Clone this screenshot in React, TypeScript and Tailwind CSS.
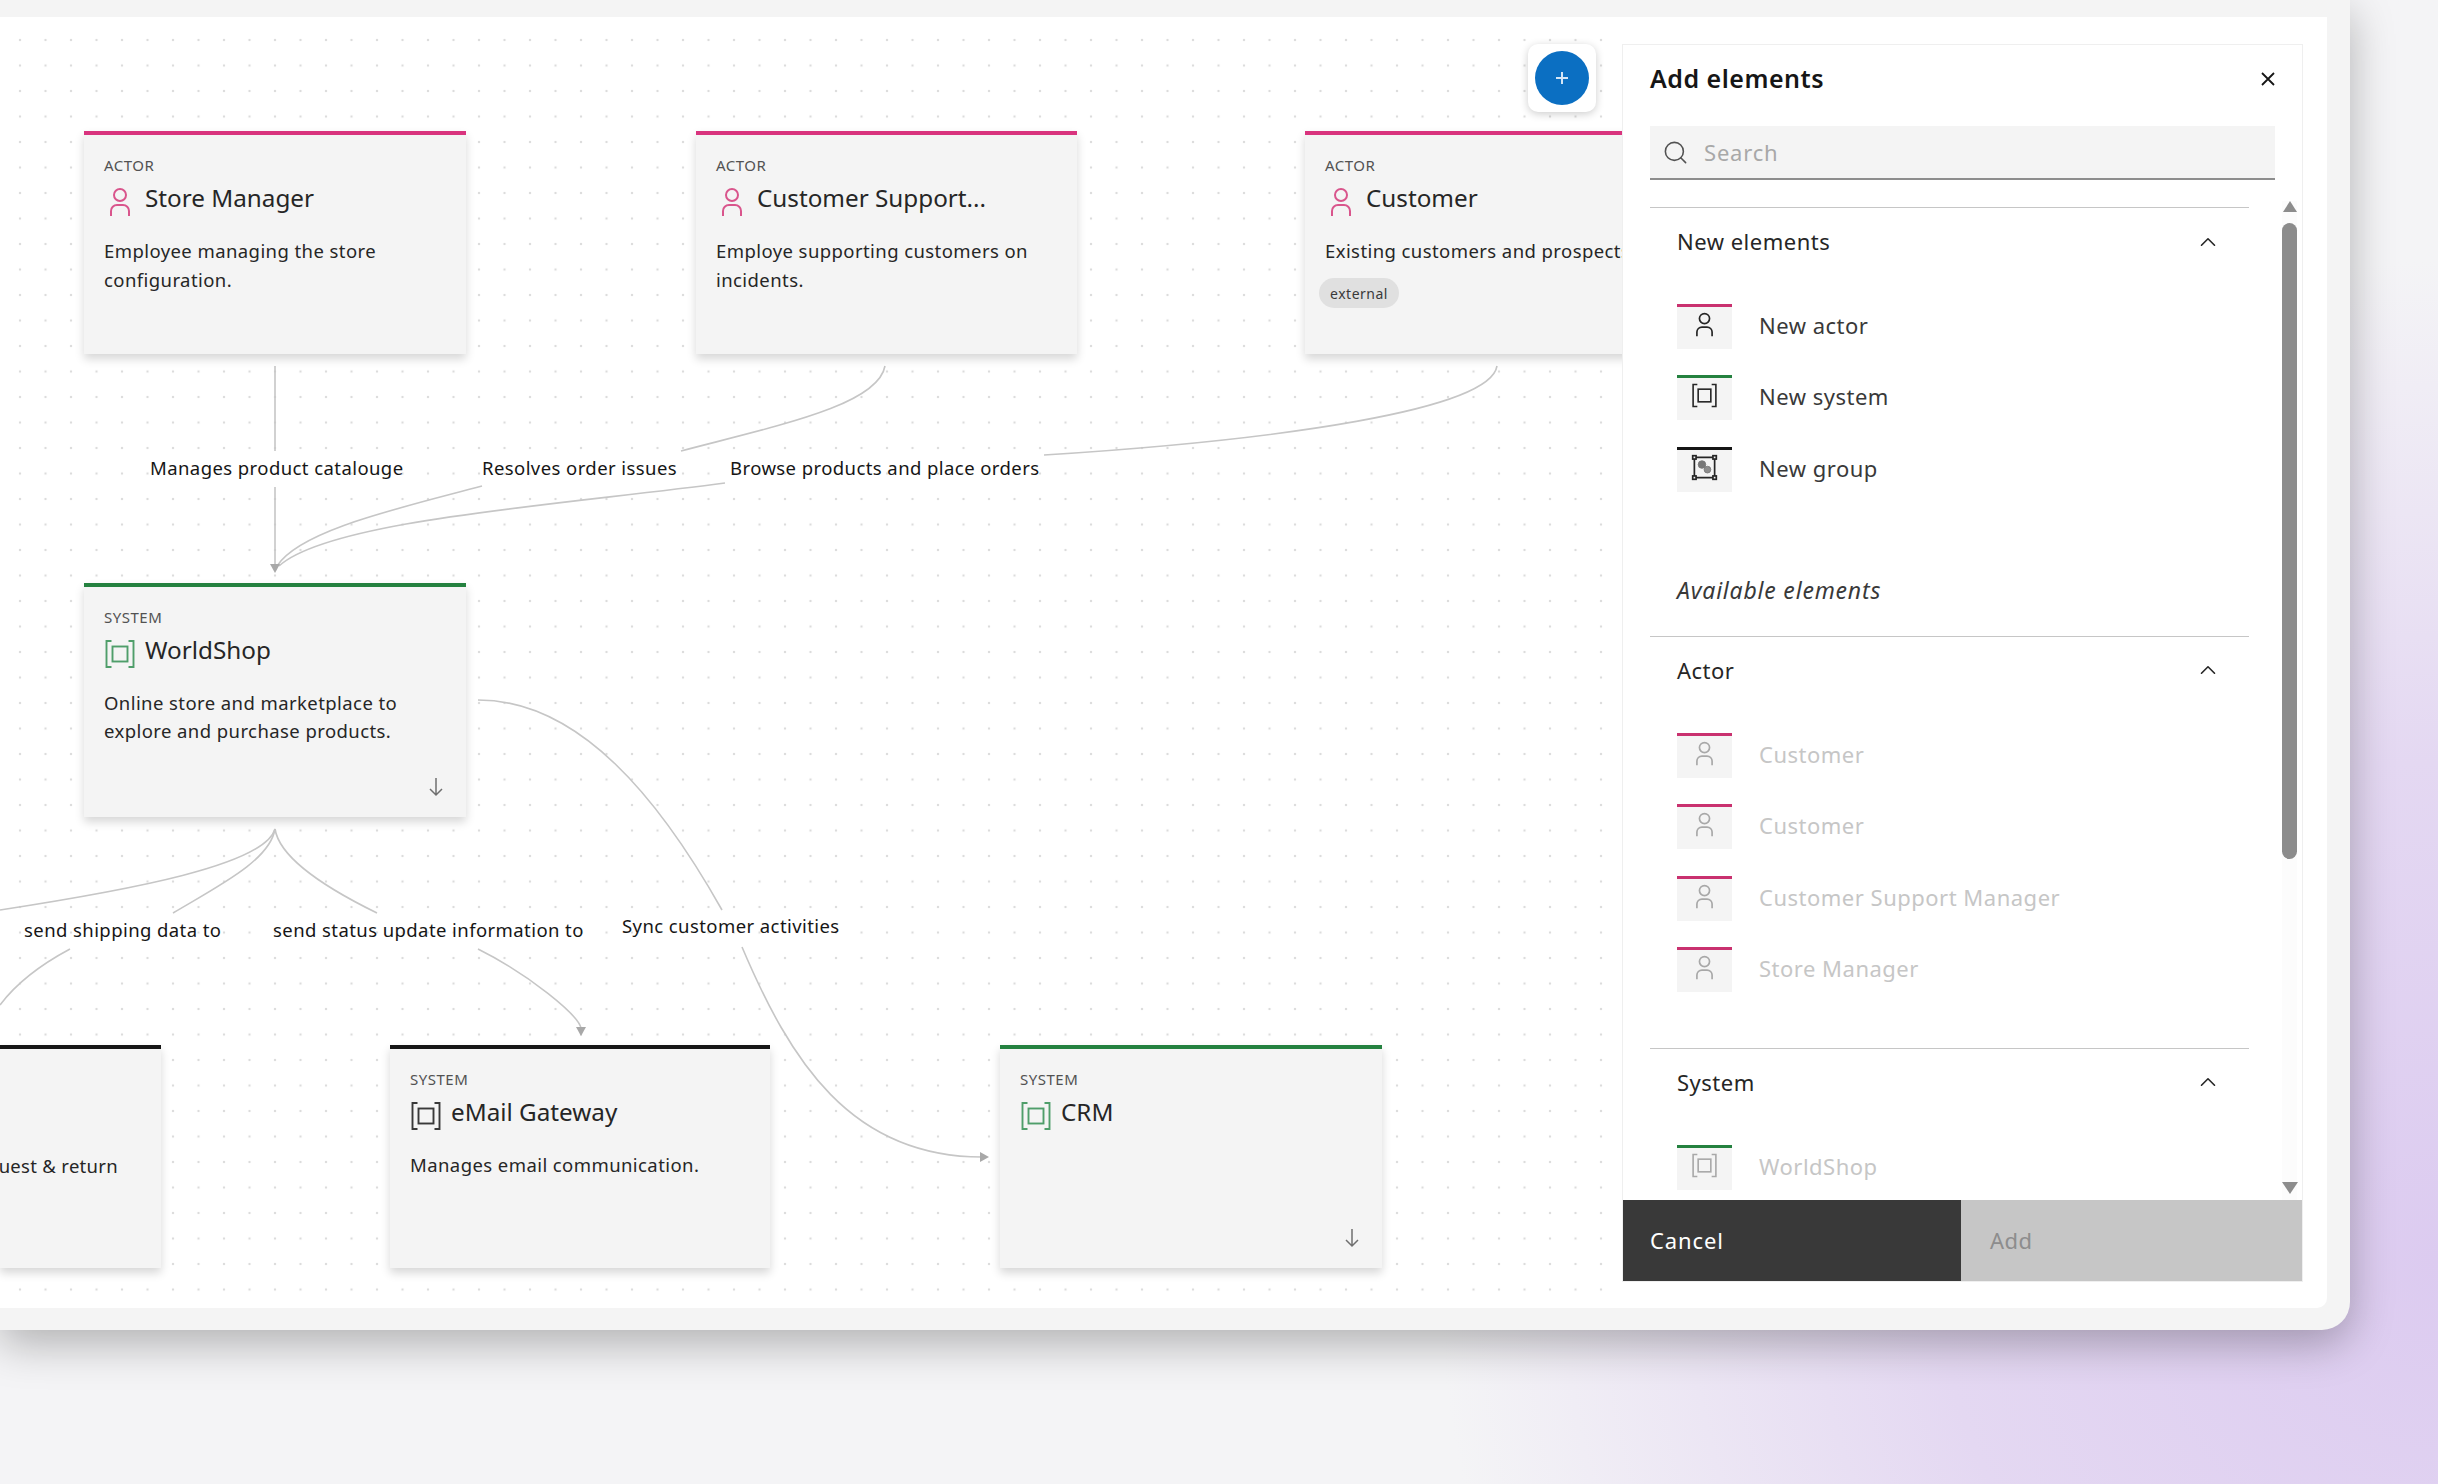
import React from 'react';
import { ChevronUp, Search } from 'lucide-react';

type Kind = 'actor' | 'system' | 'group';

function PersonIcon({ size = 32, className = '' }: { size?: number; className?: string }) {
  return (
    <svg width={size} height={size} viewBox="0 0 32 32" fill="currentColor" className={className}>
      <path d="M16 4a5 5 0 1 1-5 5 5 5 0 0 1 5-5m0-2a7 7 0 1 0 7 7 7 7 0 0 0-7-7zm10 28h-2v-5a5 5 0 0 0-5-5h-6a5 5 0 0 0-5 5v5H6v-5a7 7 0 0 1 7-7h6a7 7 0 0 1 7 7z" />
    </svg>
  );
}

function SystemIcon({ size = 32, className = '' }: { size?: number; className?: string }) {
  return (
    <svg width={size} height={size} viewBox="0 0 32 32" fill="none" stroke="currentColor" strokeWidth="1.9" className={className}>
      <path d="M7.5 3H2.5v26h5M24.5 3h5v26h-5" />
      <rect x="8.5" y="8.5" width="15" height="15" />
    </svg>
  );
}

function GroupIcon({ size = 32, className = '' }: { size?: number; className?: string }) {
  return (
    <svg width={size} height={size} viewBox="0 0 32 32" fill="none" stroke="currentColor" strokeWidth="2" className={className}>
      <path d="M6 4h20M6 28h20M4 6v20M28 6v20" />
      <rect x="2" y="2" width="4" height="4" />
      <rect x="26" y="2" width="4" height="4" />
      <rect x="2" y="26" width="4" height="4" />
      <rect x="26" y="26" width="4" height="4" />
      <circle cx="13" cy="12.5" r="4.5" fill="#777777" stroke="#777777" strokeWidth="1" />
      <circle cx="19.5" cy="18.5" r="4" fill="#8d8d8d" stroke="#777777" strokeWidth="1" />
    </svg>
  );
}

function DownArrow() {
  return (
    <svg width="16" height="20" viewBox="0 0 16 20" fill="none" stroke="#6f6f6f" strokeWidth="1.5">
      <path d="M8 1v17M2 12l6 6 6-6" />
    </svg>
  );
}

function Card({ pos, bar, label, icon, title, body, tag, arrow, tight }: {
  pos: string;
  bar: string;
  label: string;
  icon: React.ReactNode;
  title: string;
  body?: string;
  tag?: string;
  arrow?: boolean;
  tight?: boolean;
}) {
  return (
    <div className={`absolute flex flex-col border-t-[4px] bg-[#f4f4f4] px-[20px] pt-[21px] shadow-[0_5px_9px_rgba(0,0,0,0.16)] ${pos} ${bar}`}>
      <div className="text-[15px] leading-[18px] tracking-[0.5px] text-[#525252]">{label}</div>
      <div className="mt-[12px] flex items-start gap-[9px]">
        {icon}
        <div className="-mt-[4px] text-[24.25px] leading-[32px] text-[#262626]">{title}</div>
      </div>
      {body && (
        <p className={`text-[18.5px] tracking-[0.42px] whitespace-pre text-[#262626] ${tight ? 'mt-[19px] leading-[27.5px]' : 'mt-[18px] leading-[29px]'}`}>
          {body}
        </p>
      )}
      {tag && (
        <span className="mt-[13px] -ml-[6px] flex h-[30px] w-[80px] items-center justify-center rounded-full bg-[#e0e0e0] text-[14px] tracking-[0.5px] text-[#393939]">
          {tag}
        </span>
      )}
      {arrow && (
        <div className="absolute right-[22px] bottom-[20px]">
          <DownArrow />
        </div>
      )}
    </div>
  );
}

function Edges() {
  const stroke = '#c6c6c6';
  return (
    <svg width="2350" height="1330" viewBox="0 0 2350 1330" fill="none" stroke={stroke} strokeWidth="1.6" className="absolute top-0 left-0">
      <path d="M275 366V451M275 487V566" />
      <path d="M885 366C878 405 780 425 681 451" />
      <path d="M482 486C400 508 300 530 277 566" />
      <path d="M1497 366C1490 410 1280 440 1044 455" />
      <path d="M725 483C560 505 330 520 279 566" />
      <path d="M275 829C265 865 130 890 0 910" />
      <path d="M275 829C270 860 220 885 173 913" />
      <path d="M275 829C280 860 330 890 377 913" />
      <path d="M70 949C40 965 15 985 0 1005" />
      <path d="M478 949C530 975 578 1015 581 1028" />
      <path d="M478 700C580 700 660 800 722 910" />
      <path d="M742 947C790 1060 850 1157 982 1157" />
      <path d="M270 564h10l-5 9z" fill="#a8a8a8" stroke="none" />
      <path d="M576 1027h10l-5 9z" fill="#a8a8a8" stroke="none" />
      <path d="M980 1152v10l9-5z" fill="#a8a8a8" stroke="none" />
    </svg>
  );
}

function EdgeLabel({ pos, text }: { pos: string; text: string }) {
  return <div className={`absolute text-[18.5px] leading-[28px] tracking-[0.42px] whitespace-nowrap text-[#161616] ${pos}`}>{text}</div>;
}

const ICONS: Record<Kind, (p: { size?: number; className?: string }) => React.ReactElement> = {
  actor: PersonIcon,
  system: SystemIcon,
  group: GroupIcon,
};

const BARS: Record<Kind, string> = {
  actor: 'border-[#c9316f]',
  system: 'border-[#24813f]',
  group: 'border-[#161616]',
};

function ElementRow({ kind, name, disabled }: { kind: Kind; name: string; disabled?: boolean }) {
  const Icon = ICONS[kind];
  return (
    <div className="flex h-[45px] items-center gap-[27px]">
      <div className={`flex h-[45px] w-[55px] justify-center border-t-[3px] bg-[#f4f4f4] pt-[4px] ${BARS[kind]}`}>
        <Icon size={27} className={disabled ? 'text-[#a8a8a8]' : 'text-[#262626]'} />
      </div>
      <span className={`pb-[2px] text-[22px] tracking-[0.5px] ${disabled ? 'text-[#c6c6c6]' : 'text-[#393939]'}`}>{name}</span>
    </div>
  );
}

function SectionHead({ title }: { title: string }) {
  return (
    <div className="flex h-[68px] items-center justify-between border-t-[1.5px] border-[#c6c6c6] pr-[28px] pl-[27px]">
      <span className="text-[22px] tracking-[0.5px] text-[#262626]">{title}</span>
      <ChevronUp size={26} strokeWidth={1.5} className="text-[#262626]" />
    </div>
  );
}

function Panel() {
  return (
    <div className="absolute top-[44px] left-[1622px] flex h-[1238px] w-[681px] flex-col border border-[#efefef] bg-white">
      <div className="flex h-[81px] shrink-0 items-center justify-between pr-[26px] pb-[14px] pl-[27px]">
        <h2 className="text-[25px] font-semibold tracking-[0.5px] text-[#161616]">Add elements</h2>
        <svg width="16" height="16" viewBox="0 0 16 16" stroke="#161616" strokeWidth="1.8">
          <path d="M2 2l12 12M14 2L2 14" />
        </svg>
      </div>
      <div className="mx-[27px] flex h-[54px] shrink-0 items-center gap-[15px] border-b-2 border-[#8d8d8d] bg-[#f4f4f4] pl-[12px]">
        <Search size={27} strokeWidth={1.4} className="text-[#525252]" />
        <span className="text-[22px] tracking-[0.8px] text-[#a8a8a8]">Search</span>
      </div>
      <div className="relative min-h-0 flex-1 overflow-hidden">
        <div className="mt-[27px] ml-[27px] w-[599px]">
          <SectionHead title="New elements" />
          <div className="flex flex-col gap-[26.4px] pt-[29px] pl-[27px]">
            <ElementRow kind="actor" name="New actor" />
            <ElementRow kind="system" name="New system" />
            <ElementRow kind="group" name="New group" />
          </div>
          <div className="h-[144px] pt-[83px] pl-[27px] text-[23px] leading-[30px] tracking-[0.8px] text-[#393939] italic">Available elements</div>
          <SectionHead title="Actor" />
          <div className="flex flex-col gap-[26.4px] pt-[29px] pl-[27px]">
            <ElementRow kind="actor" name="Customer" disabled />
            <ElementRow kind="actor" name="Customer" disabled />
            <ElementRow kind="actor" name="Customer Support Manager" disabled />
            <ElementRow kind="actor" name="Store Manager" disabled />
          </div>
          <div className="h-[56px]" />
          <SectionHead title="System" />
          <div className="pt-[29px] pl-[27px]">
            <ElementRow kind="system" name="WorldShop" disabled />
          </div>
        </div>
        {/* scrollbar */}
        <div className="absolute top-[21px] right-[5px] bottom-0 flex w-[15px] flex-col items-center bg-[#fcfcfc]">
          <div className="h-0 w-0 border-x-[7px] border-b-[11px] border-x-transparent border-b-[#8d8d8d]" />
          <div className="mt-[11px] h-[636px] w-[15px] rounded-full bg-[#8c8c8c]" />
          <div className="mt-auto mb-[6px] h-0 w-0 border-x-[8px] border-t-[12px] border-x-transparent border-t-[#8d8d8d]" />
        </div>
      </div>
      <div className="flex h-[81px] shrink-0 text-[22px]">
        <div className="flex w-[338px] items-center bg-[#393939] pl-[27px] tracking-[0.9px] text-white">Cancel</div>
        <div className="flex flex-1 items-center bg-[#c6c6c6] pl-[29px] tracking-[0.5px] text-[#8d8d8d]">Add</div>
      </div>
    </div>
  );
}

export default function App() {
  return (
    <div className="relative h-[1484px] w-[2438px] overflow-hidden bg-[radial-gradient(1000px_1000px_at_100%_85%,#dccbf0_0%,#e4d8f2_50%,#f4f4f6_100%)] font-['Noto_Sans',sans-serif]">
      <div className="relative h-[1330px] w-[2350px] rounded-br-[28px] bg-[#f4f4f4] pt-[17px] pr-[23px] pb-[22px] shadow-[0_14px_44px_rgba(0,0,0,0.28)]">
        <div className="h-full rounded-br-[10px] bg-white">
          <div className="h-full w-[1612px] bg-[radial-gradient(circle,#dcdcdc_1px,transparent_1.6px)] bg-[length:25.5px_25.5px] bg-[position:7.25px_10.25px]" />
        </div>

        <Edges />

        <EdgeLabel pos="left-[150px] top-[454px]" text="Manages product catalouge" />
        <EdgeLabel pos="left-[482px] top-[454px]" text="Resolves order issues" />
        <EdgeLabel pos="left-[730px] top-[454px]" text="Browse products and place orders" />
        <EdgeLabel pos="left-[24px] top-[916px]" text="send shipping data to" />
        <EdgeLabel pos="left-[273px] top-[916px]" text="send status update information to" />
        <EdgeLabel pos="left-[622px] top-[912px]" text="Sync customer activities" />

        <Card pos="left-[84px] top-[131px] w-[382px] h-[223px]" bar="border-[#d9347e]" label="ACTOR" icon={<PersonIcon className="shrink-0 text-[#d9558c]" />} title="Store Manager" body={'Employee managing the store\nconfiguration.'} />
        <Card pos="left-[696px] top-[131px] w-[381px] h-[223px]" bar="border-[#d9347e]" label="ACTOR" icon={<PersonIcon className="shrink-0 text-[#d9558c]" />} title="Customer Support..." body={'Employe supporting customers on\nincidents.'} />
        <Card pos="left-[1305px] top-[131px] w-[382px] h-[223px]" bar="border-[#d9347e]" label="ACTOR" icon={<PersonIcon className="shrink-0 text-[#d9558c]" />} title="Customer" body="Existing customers and prospects." tag="external" />
        <Card pos="left-[84px] top-[583px] w-[382px] h-[234px]" bar="border-[#24813f]" label="SYSTEM" icon={<SystemIcon className="shrink-0 text-[#4f9e6a]" />} title="WorldShop" body={'Online store and marketplace to\nexplore and purchase products.'} arrow tight />

        <div className="absolute top-[1045px] left-0 flex h-[223px] w-[161px] justify-end border-t-[4px] border-[#161616] bg-[#f4f4f4] pt-[102px] pr-[43px] shadow-[0_5px_9px_rgba(0,0,0,0.16)]">
          <span className="text-[18.5px] leading-[29px] tracking-[0.3px] whitespace-nowrap text-[#262626]">uest &amp; return</span>
        </div>
        <Card pos="left-[390px] top-[1045px] w-[380px] h-[223px]" bar="border-[#161616]" label="SYSTEM" icon={<SystemIcon className="shrink-0 text-[#393939]" />} title="eMail Gateway" body="Manages email communication." />
        <Card pos="left-[1000px] top-[1045px] w-[382px] h-[223px]" bar="border-[#24813f]" label="SYSTEM" icon={<SystemIcon className="shrink-0 text-[#4f9e6a]" />} title="CRM" arrow />

        <div className="absolute top-[44px] left-[1528px] flex h-[68px] w-[68px] items-center justify-center rounded-[10px] bg-white shadow-[0_2px_8px_rgba(0,0,0,0.2)]">
          <div className="flex h-[54px] w-[54px] items-center justify-center rounded-full bg-[#0b6fc2]">
            <svg width="14" height="14" viewBox="0 0 14 14" stroke="#d5e6f6" strokeWidth="2">
              <path d="M7 1v12M1 7h12" />
            </svg>
          </div>
        </div>

        <Panel />
      </div>
    </div>
  );
}
